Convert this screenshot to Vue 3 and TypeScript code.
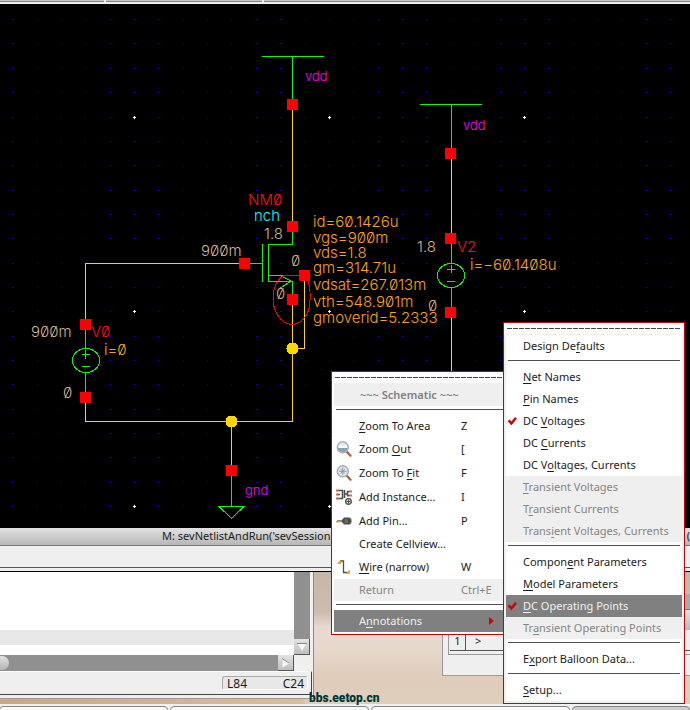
<script setup lang="ts">
import { onMounted, ref } from 'vue'

interface MenuEntry {
  kind: 'item' | 'rule' | 'title'
  label?: string
  keys?: string
  icon?: 'zoom-out' | 'zoom-fit' | 'instance' | 'pin' | 'wire'
  disabled?: boolean
  active?: boolean
  checked?: boolean
  submenu?: boolean
}

interface Label {
  x: number
  y: number
  text: string
  tone: string
}

// An ampersand in a label marks the mnemonic letter that follows it.
const schematicMenu: MenuEntry[] = [
  { kind: 'title', label: '~~~ Schematic ~~~' },
  { kind: 'rule' },
  { kind: 'item', label: '&Zoom To Area', keys: 'Z' },
  { kind: 'item', label: 'Zoom &Out', keys: '[', icon: 'zoom-out' },
  { kind: 'item', label: 'Zoom To &Fit', keys: 'F', icon: 'zoom-fit' },
  { kind: 'item', label: 'Add Instance...', keys: 'I', icon: 'instance' },
  { kind: 'item', label: 'Add Pin...', keys: 'P', icon: 'pin' },
  { kind: 'item', label: 'Create Cellview...' },
  { kind: 'item', label: '&Wire (narrow)', keys: 'W', icon: 'wire' },
  { kind: 'item', label: 'Return', keys: 'Ctrl+E', disabled: true },
  { kind: 'rule' },
  { kind: 'item', label: 'A&nnotations', active: true, submenu: true },
]

const annotationMenu: MenuEntry[] = [
  { kind: 'item', label: 'Design De&faults' },
  { kind: 'rule' },
  { kind: 'item', label: '&Net Names' },
  { kind: 'item', label: '&Pin Names' },
  { kind: 'item', label: 'DC &Voltages', checked: true },
  { kind: 'item', label: 'DC &Currents' },
  { kind: 'item', label: 'DC V&oltages, Currents' },
  { kind: 'item', label: '&Transient Voltages', disabled: true },
  { kind: 'item', label: 'T&ransient Currents', disabled: true },
  { kind: 'item', label: 'Trans&ient Voltages, Currents', disabled: true },
  { kind: 'rule' },
  { kind: 'item', label: 'Compon&ent Parameters' },
  { kind: 'item', label: '&Model Parameters' },
  { kind: 'item', label: '&DC Operating Points', checked: true, active: true },
  { kind: 'item', label: 'Tr&ansient Operating Points', disabled: true },
  { kind: 'rule' },
  { kind: 'item', label: 'E&xport Balloon Data...' },
  { kind: 'rule' },
  { kind: 'item', label: '&Setup...' },
]

function parts(label = ''): [string, string, string] {
  const at = label.indexOf('&')
  return at < 0 ? [label, '', ''] : [label.slice(0, at), label[at + 1], label.slice(at + 2)]
}

const columns = Array.from({ length: 60 }, (_, i) => Math.round(134 + 24.37 * (i - 5)))
const rows = Array.from({ length: 21 }, (_, j) => Math.floor(117 + 24.34 * (j - 4)) - 4)
const majors = [0, 1, 2].flatMap((i) => [0, 1, 2].map((j) => ({ x: columns[5 + 8 * i], y: rows[4 + 8 * j] })))

const pins = [
  [287, 99], [287, 221], [239, 258], [299, 270], [287, 294], [80, 319], [80, 392],
  [226, 465], [445, 148], [445, 233], [445, 307],
]

const labels: Label[] = [
  { x: 305, y: 81, text: 'vdd', tone: 'net' },
  { x: 463, y: 130, text: 'vdd', tone: 'net' },
  { x: 245, y: 495, text: 'gnd', tone: 'net' },
  { x: 248, y: 205, text: 'NM0', tone: 'name' },
  { x: 254, y: 221, text: 'nch', tone: 'cell' },
  { x: 457, y: 252, text: 'V2', tone: 'name' },
  { x: 91, y: 337, text: 'V0', tone: 'name' },
  { x: 264, y: 239, text: '1.8', tone: 'volt' },
  { x: 201, y: 256, text: '900m', tone: 'volt' },
  { x: 291, y: 266, text: '0', tone: 'volt' },
  { x: 276, y: 299, text: '0', tone: 'volt' },
  { x: 417, y: 252, text: '1.8', tone: 'volt' },
  { x: 428, y: 311, text: '0', tone: 'volt' },
  { x: 31, y: 337, text: '900m', tone: 'volt' },
  { x: 63, y: 398, text: '0', tone: 'volt' },
  { x: 104, y: 355, text: 'i=0', tone: 'oper' },
  { x: 470, y: 270, text: 'i=−60.1408u', tone: 'oper' },
  { x: 313, y: 227, text: 'id=60.1426u', tone: 'oper' },
  { x: 313, y: 243, text: 'vgs=900m', tone: 'oper' },
  { x: 313, y: 258, text: 'vds=1.8', tone: 'oper' },
  { x: 313, y: 273, text: 'gm=314.71u', tone: 'oper' },
  { x: 313, y: 290, text: 'vdsat=267.013m', tone: 'oper' },
  { x: 313, y: 307, text: 'vth=548.901m', tone: 'oper' },
  { x: 313, y: 323, text: 'gmoverid=5.2333', tone: 'oper' },
]

// Schematic zeros carry a slash, drawn over each zero once the text is laid out.
const marks = ref<SVGTextElement[]>([])
const slashes = ref<{ d: string; tone: string }[]>([])

onMounted(() => {
  slashes.value = marks.value.flatMap((el) => {
    const text = el.textContent ?? ''
    const y = Number(el.getAttribute('y'))
    return [...text].flatMap((ch, i) => {
      if (ch !== '0') return []
      const left = el.getStartPositionOfChar(i).x
      const right = el.getEndPositionOfChar(i).x
      return [{ d: `M${left + 2} ${y}L${right - 2} ${y - 11}`, tone: el.dataset.tone ?? '' }]
    })
  })
})
</script>

<template>
  <main class="screen">
    <div class="tabs top"><i class="tab t1"></i><i class="tab t2"></i><i class="tab t3"></i></div>

    <svg class="schematic" height="524" role="img" aria-label="Schematic">
      <g fill="#0000ee">
        <template v-for="y in rows" :key="y">
          <rect v-for="x in columns" :key="x" :x="x" :y="y" width="1" height="1" />
        </template>
      </g>
      <path v-for="(m, k) in majors" :key="k" :d="`M${m.x - 1} ${m.y + 0.5}h3M${m.x + 0.5} ${m.y - 1}v3`" stroke="#fff" />
      <g transform="translate(0 -4)" shape-rendering="crispEdges" fill="none">
        <path
          stroke="#ffd700"
          d="M292.5 110V221M292.5 305V421.5H85.5V403M304.5 281V348.5H292M239 263.5H85.5V319M231.5 421V465M451.5 159V234M451.5 317V530"
        />
        <path
          stroke="#00ff00"
          d="M262 56.500H324M292.500 56V100M420 104.500H482M451.500 104V148M292.500 232V244.500H268M262.500 244V282M268.500 244V282M249 263.500H262M268 275.500H284M268 281.500H292.500V294M281 276L291 281L279 289M85.500 329V348M85.500 372V392M82 354.500H90M85.500 350V359M82 366.500H90M451.500 244V263M451.500 288V307M447 269.500H455M451.500 265V273M447 281.500H455M231.500 476V506M219 506.500H244L231.500 518.500Z"
        />
        <ellipse cx="86" cy="360.500" rx="13.500" ry="12" stroke="#00ff00" />
        <ellipse cx="451" cy="275.500" rx="13.500" ry="12" stroke="#00ff00" />
        <path stroke="#ff0000" d="M283 275.500H300M283 276C271 284 271 304 277 314C285 328 299 328 307 314C311 306 311 290 308 281" />
        <circle cx="292.500" cy="348.500" r="6" fill="#ffd700" />
        <circle cx="231.500" cy="421.500" r="6" fill="#ffd700" />
        <rect v-for="(p, k) in pins" :key="k" :x="p[0]" :y="p[1]" width="11" height="11" fill="#ff0000" />
      </g>
      <g transform="translate(0 -4)">
        <text v-for="(l, k) in labels" :key="k" ref="marks" :x="l.x" :y="l.y" :data-tone="l.tone" :class="['mark', l.tone]">{{ l.text }}</text>
        <path v-for="(s, k) in slashes" :key="k" :d="s.d" :class="['slash', s.tone]" />
      </g>
    </svg>

    <header class="titlebar"><span>M: sevNetlistAndRun('sevSession</span><span>(</span></header>
    <div class="toolbar"></div>

    <section class="desktop">
      <div class="editor">
        <div class="pane">
          <div class="page"><div class="current"></div></div>
          <div class="vbar">
            <button type="button" class="step" aria-label="Scroll down">
              <svg width="16" height="16"><path d="M3.500 4.500H12.500L8 12Z" fill="#f6f6f6" /><path d="M3 4.500H13" stroke="#888" /></svg>
            </button>
          </div>
          <div class="hbar">
            <span class="thumb"></span>
            <button type="button" class="step" aria-label="Scroll right">
              <svg width="16" height="16"><path d="M4.500 3.500V12.500L12 8Z" fill="#f6f6f6" /><path d="M4 3.500L11 8" stroke="#888" /></svg>
            </button>
          </div>
        </div>
        <div class="status"><div class="cursor"><span>L84</span><span>C24</span></div></div>
      </div>

      <div class="console">
        <div class="strip"></div>
        <div class="prompt"><span class="line">1</span><span class="code">&gt;</span></div>
      </div>
      <span class="watermark">bbs.eetop.cn</span>
    </section>
    <div class="tabs bottom"><i class="tab b1"></i><i class="tab b2"></i><i class="tab b3"></i><i class="tab b4"></i></div>

    <nav
      v-for="(menu, n) in [schematicMenu, annotationMenu]"
      :key="n"
      :class="['menu', n === 0 ? 'main' : 'sub']"
      role="menu"
      :aria-label="n === 0 ? 'Schematic' : 'Annotations'"
    >
      <div class="tear"></div>
      <template v-for="(e, k) in menu" :key="k">
        <hr v-if="e.kind === 'rule'" class="rule" />
        <div v-else-if="e.kind === 'title'" class="heading">{{ e.label }}</div>
        <button
          v-else
          type="button"
          :role="e.checked ? 'menuitemcheckbox' : 'menuitem'"
          :aria-checked="e.checked ? 'true' : undefined"
          :disabled="e.disabled"
          :class="['item', { active: e.active, tall: e.icon }]"
        >
          <span class="glyph">
            <svg v-if="e.checked" width="10" height="10" viewBox="0 0 10 10">
              <path d="M1 4L3.500 7L8 1.500" fill="none" stroke="#7a1010" stroke-width="2.400" opacity=".45" />
              <path d="M.500 4.500L3.300 7.500L8 2" fill="none" stroke="#d40000" stroke-width="2.200" />
            </svg>
            <svg v-else-if="e.icon === 'zoom-out' || e.icon === 'zoom-fit'" width="17" height="17" viewBox="0 0 17 17">
              <path d="M11 11L14.500 14.700" stroke="#b5603c" stroke-width="2.400" stroke-linecap="round" />
              <path d="M10 10L12 12" stroke="#777" stroke-width="1.500" />
              <circle cx="6.800" cy="6.300" r="5.500" fill="#e3e9ef" stroke="#a3adb6" stroke-width="1.400" />
              <path v-if="e.icon === 'zoom-out'" d="M2 7H11.600Q11 11 6.800 11T2 7Z" fill="#8c9fae" />
              <rect v-if="e.icon === 'zoom-out'" x="3" y="5" width="8" height="2" fill="#fff" />
              <path v-else d="M6.800 2.500V10M3 6.300H10.600M4.500 4L9 8.600M9 4L4.500 8.600" stroke="#8f9ba5" />
            </svg>
            <svg v-else-if="e.icon === 'instance'" width="17" height="17" viewBox="0 0 17 17">
              <path d="M1 1.500H6.500V9.500H1M1 5.500H4M8.500 1V9M8.500 5H11.500M11.500 2V7.500M11.500 2.500H14M11.500 6.500H14" fill="none" stroke="#4c4c4c" stroke-width="1.500" />
              <path d="M0 .500H2.500V2.500H0ZM0 4.500H2.500V6.500H0ZM0 8.500H2.500V10.500H0ZM13.500 1.500H16V3.500H13.500ZM13.500 5.500H16V7.500H13.500Z" fill="#d0704a" />
              <circle cx="12.500" cy="12.500" r="2.800" fill="#ddd" stroke="#505050" stroke-width="1.300" />
              <path d="M12.500 10.500V14.500M10.500 12.500H14.500" stroke="#505050" />
            </svg>
            <svg v-else-if="e.icon === 'pin'" width="17" height="17" viewBox="0 0 17 17">
              <path d="M1 8H6" stroke="#666" stroke-width="1.500" />
              <path d="M0 8H4V9.500H0Z" fill="#e8a11a" />
              <path d="M5 8L8 4.500H13Q15.500 4.500 15.500 8T13 11.500H8Z" fill="#4b4b4b" stroke="#aaa" stroke-width=".600" />
              <path d="M8.500 6H12V10H8.500Z" fill="#686868" />
            </svg>
            <svg v-else-if="e.icon === 'wire'" width="17" height="17" viewBox="0 0 17 17">
              <path d="M4 2H7.500V13.500H11" fill="none" stroke="#4c4c4c" stroke-width="1.300" />
              <path d="M1.500 4.500L5 1V4.500ZM10 14.500L13.500 11V14.500Z" fill="#f0a010" stroke="#c98a20" stroke-width=".500" />
            </svg>
          </span>
          <span class="label">{{ parts(e.label)[0] }}<u>{{ parts(e.label)[1] }}</u>{{ parts(e.label)[2] }}</span>
          <span class="keys">{{ e.keys }}</span>
          <svg v-if="e.submenu" class="arrow" width="6" height="8"><path d="M0 0L5 4L0 8Z" fill="#d40000" /></svg>
        </button>
      </template>
    </nav>
  </main>
</template>

<style>
body {
  margin: 0;
  overflow: hidden;
}
</style>

<style scoped>
.screen {
  position: relative;
  display: flex;
  flex-direction: column;
  min-height: 100vh;
  overflow: hidden;
  background: #efefef;
  color: #1c1c1c;
  font: 11px/22px "Noto Sans", "Open Sans", sans-serif;
}

.tabs {
  display: flex;
  gap: 2px;
  overflow: hidden;
  box-sizing: border-box;
  background: #f0f0f0;
}

.top {
  height: 4px;
}

.top .tab {
  height: 2px;
  box-sizing: border-box;
  border-bottom: 1px solid #858585;
  background: #c8c8c8;
}

.t1 {
  width: 104px;
}

.t2 {
  width: 156px;
}

.t3 {
  flex: 1;
}

.bottom {
  height: 6px;
  padding-top: 2px;
}

.bottom .tab {
  height: 12px;
  box-sizing: border-box;
  border: 1px solid #858585;
  border-radius: 4px 4px 0 0;
  background: #fafafa;
}

.b1 {
  width: 169px;
  margin-left: -1px;
}

.b2,
.b3 {
  width: 199px;
}

.bottom .b4 {
  flex: 1;
  background: #cdcdcd;
}

.schematic {
  display: block;
  width: 100%;
  background: #000;
}

.net {
  fill: #ff00ff;
}

.cell {
  fill: #00ffff;
}

.name {
  fill: #ff1010;
  stroke: #ff1010;
}

.volt {
  fill: #d2b48c;
  stroke: #d2b48c;
}

.oper {
  fill: #ffa500;
  stroke: #ffa500;
}

.mark {
  font: 300 15px Inter, sans-serif;
  stroke: none;
}

.mark.net {
  font-size: 13px;
}

.titlebar {
  display: flex;
  justify-content: space-between;
  height: 18px;
  padding-left: 162px;
  line-height: 16px;
  box-sizing: border-box;
  border-bottom: 1px solid #777;
  background: linear-gradient(#e2e2e2, #b6b6b6);
}

.toolbar {
  height: 26px;
  box-sizing: border-box;
  border-bottom: 1px solid #000;
  background: linear-gradient(#efefef 21px, #555 21px, #555 22px, #efefef 22px);
}

.desktop {
  position: relative;
  flex: 1;
  min-height: 132px;
  background:
    linear-gradient(90deg, #c9a87e, #d8bd9c 300px, transparent 310px) 0 100% / 100% 6px no-repeat,
    linear-gradient(#c6b7a9 0, #cbbcae 30%, #e8dad0 42%, #e6d8cb 60%, #dfccb9 80%, #e0cebd 100%);
}

.editor {
  width: 314px;
  height: 127px;
  box-sizing: border-box;
  border-right: 1px solid #8c8c8c;
  border-bottom: 1px solid #9a9a9a;
  background: #efefef;
}

.pane {
  display: grid;
  grid-template-columns: 294px 16px;
  grid-template-rows: 83px 16px;
}

.page {
  padding-top: 58px;
  background: #fff;
}

.current {
  height: 15px;
  background: #e8e8e8;
}

.vbar,
.hbar {
  display: flex;
  background: #909090;
}

.vbar {
  align-items: flex-end;
}

.hbar {
  justify-content: space-between;
}

.thumb {
  width: 9px;
  height: 14px;
  margin-top: 1px;
  border-radius: 0 7px 7px 0;
  background: linear-gradient(#e0e0e0, #b5b5b5);
}

.step {
  width: 16px;
  height: 16px;
  padding: 0;
  border: 0;
  box-shadow: inset -1px -1px #555;
  background: linear-gradient(#e4e4e4, #bbb);
}

.step svg {
  display: block;
}

.status {
  display: flex;
  justify-content: flex-end;
  width: 312px;
  height: 24px;
  padding: 4px 3px 4px 0;
  box-sizing: border-box;
  border-top: 1px solid #fff;
  border-right: 1px solid #444;
  border-bottom: 1px solid #444;
}

.cursor {
  display: flex;
  justify-content: space-between;
  width: 86px;
  padding: 0 3px 0 4px;
  box-sizing: border-box;
  border: 1px solid #aaa;
  border-right-color: #fff;
  border-bottom-color: #fff;
  border-radius: 3px;
  background: #e8e8e8;
  font-size: 12px;
  line-height: 14px;
}

.console {
  position: absolute;
  top: 22px;
  right: 0;
  left: 442px;
  height: 82px;
  padding: 0 0 0 5px;
  box-sizing: border-box;
  border-left: 1px solid #999;
  border-bottom: 1px solid #999;
  background: #efefef;
}

.strip {
  height: 36px;
  background: linear-gradient(#aaa 15px, #777 15px, #777 16px, #e2e2e2 16px, #b8b8b8);
}

.prompt {
  display: flex;
  height: 25px;
  padding: 0 0 3px 1px;
  box-sizing: border-box;
  border-bottom: 1px solid #999;
  border-left: 1px solid #999;
  line-height: 21px;
}

.line {
  width: 16px;
  box-sizing: border-box;
  border-right: 1px solid #555;
  border-bottom: 1px solid #555;
  text-align: center;
}

.code {
  flex: 1;
  padding-left: 9px;
  border-bottom: 1px solid #555;
}

.watermark {
  position: absolute;
  bottom: -2px;
  left: 309px;
  color: #003636;
  font: 900 12px/16px Roboto, "Liberation Sans", sans-serif;
}

.menu {
  position: absolute;
  box-sizing: border-box;
  padding: 0 2px 2px;
  border: 1px solid #cc0000;
  background: #fff;
}

.main {
  top: 371px;
  left: 331px;
  width: 178px;
}

.sub {
  top: 322px;
  left: 503px;
  width: 182px;
  background: #efefef;
}

.tear {
  height: 11px;
  margin: 0 -2px;
  background: repeating-linear-gradient(90deg, #444 0 5px, #fff 5px 6px) 3px 5px / calc(100% - 7px) 1px no-repeat #fff;
}

.sub .tear {
  border-bottom: 1px solid #efefef;
}

.heading {
  height: 23px;
  padding-left: 26px;
  background: #efefef;
  color: #808080;
  font-weight: 600;
  line-height: 24px;
}

.rule {
  height: 9px;
  margin: 0;
  border: 0;
  background: linear-gradient(#505050, #505050) 2px 3px / calc(100% - 4px) 1px no-repeat #fff;
}

.item {
  position: relative;
  display: grid;
  grid-template-columns: 25px 102px 1fr;
  align-items: center;
  width: 100%;
  height: 22px;
  padding: 0;
  border: 0;
  background: #fff;
  color: #1c1c1c;
  font: inherit;
  text-align: left;
  white-space: nowrap;
}

.sub .item {
  grid-template-columns: 17px 1fr;
}

.item.tall {
  height: 24px;
}

.item:disabled {
  background: #efefef;
  color: #858585;
}

.item.active {
  background: #808080;
  color: #f0f0f0;
}

.glyph {
  display: flex;
  padding-left: 2px;
}

.item u {
  text-decoration-thickness: 1px;
  text-underline-offset: 2px;
  text-decoration-skip-ink: none;
}

.arrow {
  position: absolute;
  right: 11px;
}
</style>
